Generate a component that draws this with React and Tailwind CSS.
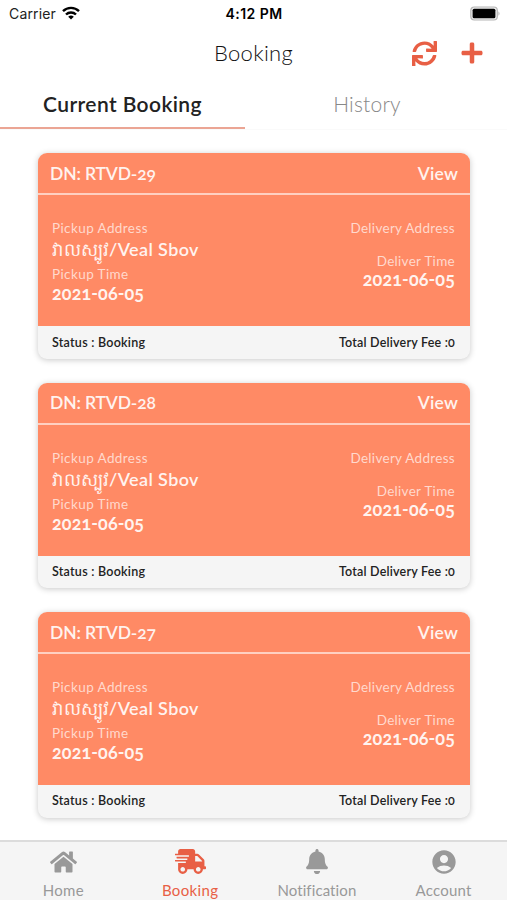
import React, { useState } from 'react';
import { FaBell, FaHome, FaPlus, FaShippingFast, FaSync } from 'react-icons/fa';
import { MdAccountCircle } from 'react-icons/md';

const bookings = [
  { id: 'RTVD-29', pickup: '2021-06-05', deliver: '2021-06-05', status: 'Booking', fee: 0 },
  { id: 'RTVD-28', pickup: '2021-06-05', deliver: '2021-06-05', status: 'Booking', fee: 0 },
  { id: 'RTVD-27', pickup: '2021-06-05', deliver: '2021-06-05', status: 'Booking', fee: 0 },
];

const navItems = [
  { label: 'Home', icon: FaHome, iconClass: 'w-[27px] h-[24px]', textClass: 'tracking-[0.35px]' },
  { label: 'Booking', icon: FaShippingFast, iconClass: 'w-[31px] h-[25px]', textClass: 'tracking-[0.35px]' },
  { label: 'Notification', icon: FaBell, iconClass: 'w-[22px] h-[25px]', textClass: 'tracking-[0.1px]' },
  { label: 'Account', icon: MdAccountCircle, iconClass: 'w-[28px] h-[28px]', textClass: 'tracking-[0.25px]' },
];

function StatusBar() {
  return (
    <div className="h-7 pl-[9px] pr-[8px] grid grid-cols-3 items-center font-['Inter',sans-serif] text-[14px] text-[#222]">
      <div className="flex items-center gap-[6px] -mt-[2px]">
        <span className="tracking-[0.15px]">Carrier</span>
        <svg className="w-[18px] h-[14px]" viewBox="0 0 18 14" fill="none" stroke="#000" strokeWidth="2.4">
          <path d="M1 5.2a11.4 11.4 0 0 1 16 0" />
          <path d="M4 8.5a7.1 7.1 0 0 1 10 0" />
          <path d="M9 13.6 6.2 10.8a4 4 0 0 1 5.6 0z" fill="#000" stroke="none" />
        </svg>
      </div>
      <span className="text-center font-semibold text-black whitespace-nowrap tracking-[0.45px] -mt-[2px]">4:12 PM</span>
      <svg className="w-[31px] h-[15px] justify-self-end -mr-[2px] mt-[-2px]" viewBox="0 0 31 15">
        <rect x="0.8" y="1" width="26.5" height="13" rx="3.5" fill="#eee" stroke="#b5b5b5" strokeWidth="1.2" />
        <rect x="2.6" y="2.8" width="22.8" height="9.4" rx="1.5" fill="#000" />
        <path d="M28.5 5.2q2 2.3 0 4.6z" fill="#aaa" />
      </svg>
    </div>
  );
}

function BookingCard({ booking }) {
  return (
    <div className="h-[205.4px] shrink-0 rounded-[9px] overflow-hidden bg-[#f5f5f5] shadow-[0_1px_6px_rgba(0,0,0,0.22)] flex flex-col">
      <div className="h-[42px] shrink-0 pt-px pl-[12px] pr-3 flex items-center justify-between bg-[#ff8a65] border-b-2 border-[#ffd0c1] text-[17.5px] font-semibold text-[#fff3ef] oldstyle-nums">
        <span className="tracking-[-0.15px]">DN: {booking.id}</span>
        <span className="tracking-[0.2px]">View</span>
      </div>
      <div className="h-[131px] shrink-0 pt-[23px] pl-[14px] pr-[15px] flex justify-between bg-[#ff8a65] text-[#ffd9cd]">
        <div>
          <div className="h-5 text-[13.5px] leading-5 tracking-[0.4px]">Pickup Address</div>
          <div className="h-[27px] text-[18px] leading-[22px] font-semibold text-[#fff3ef] tracking-[0.4px] whitespace-nowrap">
            <span className="font-normal tracking-normal">វាលស្បូវ</span>/Veal Sbov
          </div>
          <div className="h-[18px] text-[13.5px] leading-[19px] tracking-[0.4px]">Pickup Time</div>
          <div className="text-[18px] leading-[20px] font-bold text-[#fff3ef] oldstyle-nums tracking-[0.1px]">{booking.pickup}</div>
        </div>
        <div className="text-right">
          <div className="h-[33px] text-[13.5px] leading-5 tracking-[0.3px]">Delivery Address</div>
          <div className="h-[18px] text-[13.5px] leading-5 tracking-[0.3px]">Deliver Time</div>
          <div className="text-[18px] leading-[20px] font-bold text-[#fff3ef] oldstyle-nums tracking-[0.1px]">{booking.deliver}</div>
        </div>
      </div>
      <div className="flex-1 pl-[14px] pr-[15px] pt-px flex items-center justify-between text-[12.5px] font-semibold text-[#222] oldstyle-nums">
        <span className="tracking-[0.25px]">Status : {booking.status}</span>
        <span className="tracking-[0.2px]">Total Delivery Fee :{booking.fee}</span>
      </div>
    </div>
  );
}

function App() {
  const [tab, setTab] = useState('current'); // 'current' | 'history'
  const [page, setPage] = useState('Booking');

  return (
    <div className="w-[507px] h-[900px] overflow-hidden bg-white flex flex-col font-['Lato','Noto_Sans',sans-serif]">
      <StatusBar />

      {/* Title and actions */}
      <header className="h-[50px] pl-[23px] pr-[23px] grid grid-cols-3 items-center">
        <h1 className="col-start-2 pb-[2px] text-center text-[22px] font-light tracking-[0.3px] text-[#111]">Booking</h1>
        <div className="flex items-center justify-end gap-[23px] text-[#e85f45]">
          <button aria-label="Refresh"><FaSync className="w-[25px] h-[25px]" /></button>
          <button aria-label="Add booking"><FaPlus className="w-6 h-6" /></button>
        </div>
      </header>

      <div className="h-[52px] shrink-0 flex border-b border-[#fafafa] text-[21px]">
        <button
          className={`w-[245px] pt-[3px] ${tab === 'current' ? 'border-b-2 border-[#eba594] font-semibold text-[#222]' : 'font-light text-[#888]'} tracking-[0.4px]`}
          onClick={() => setTab('current')}
        >
          Current Booking
        </button>
        <button
          className={`flex-1 pt-px pr-[18px] ${tab === 'history' ? 'border-b-2 border-[#eba594] font-semibold text-[#222]' : 'font-light text-[#888]'} tracking-[0.2px]`}
          onClick={() => setTab('history')}
        >
          History
        </button>
      </div>

      <main className="flex-1 min-h-0 pt-[23.4px] pl-[38px] pr-[37px] flex flex-col gap-[24px]">
        {bookings.map(booking => (
          <BookingCard key={booking.id} booking={booking} />
        ))}
      </main>

      <nav className="h-[60px] shrink-0 grid grid-cols-4 bg-[#f5f5f5] border-t-2 border-[#dcdcdc]">
        {navItems.map(({ label, icon: Icon, iconClass, textClass }) => (
          <button
            key={label}
            className={`flex flex-col items-center ${page === label ? 'text-[#e85f45]' : 'text-[#999]'}`}
            onClick={() => setPage(label)}
          >
            <span className="h-[39px] flex items-center"><Icon className={iconClass} /></span>
            <span className={`text-[15px] leading-[19px] ${textClass}`}>{label}</span>
          </button>
        ))}
      </nav>
    </div>
  );
}

export default App;
